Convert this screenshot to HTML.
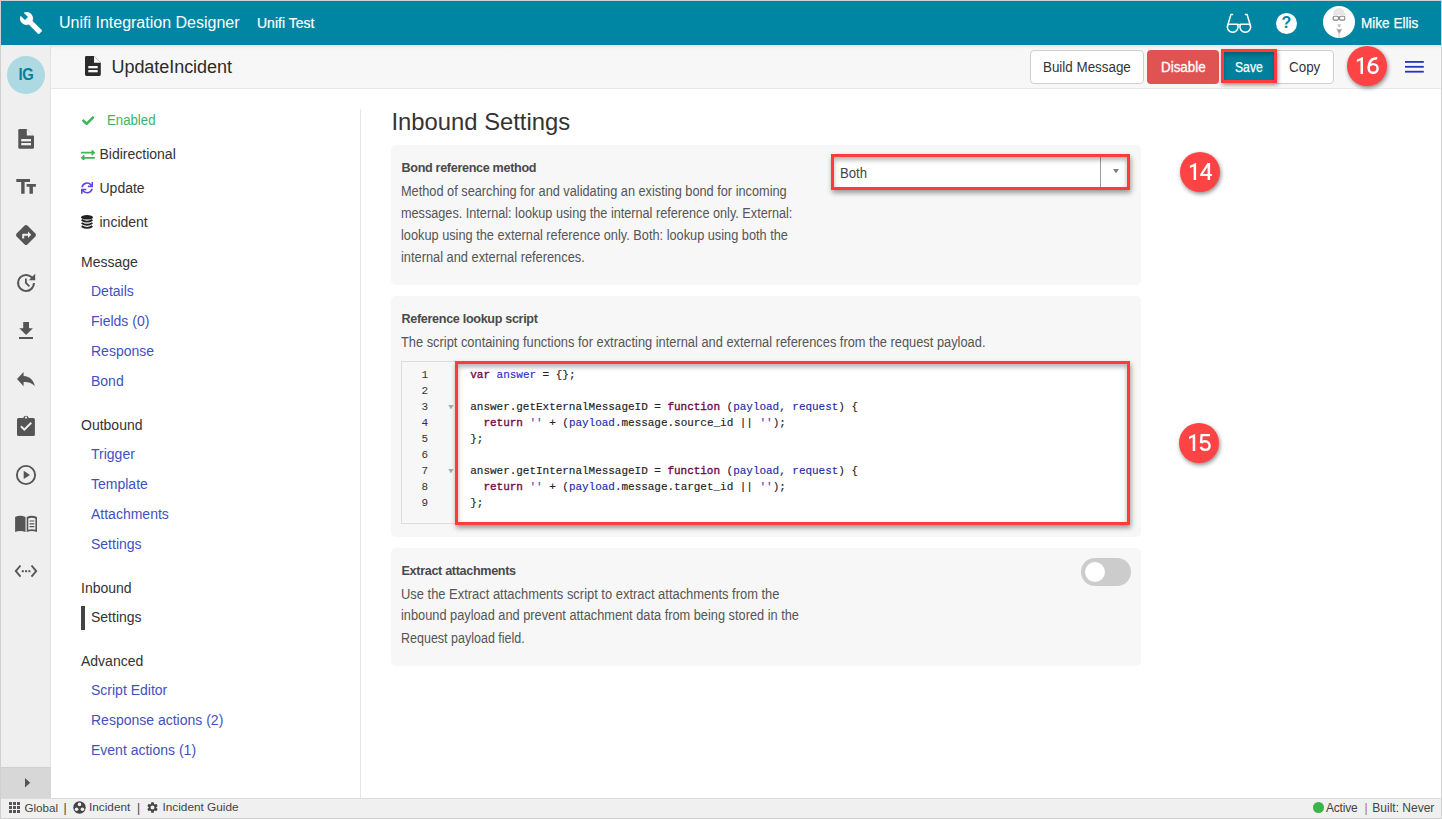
<!DOCTYPE html>
<html><head><meta charset="utf-8">
<style>
*{box-sizing:border-box;margin:0;padding:0}
html,body{width:1442px;height:819px;overflow:hidden;background:#fff;font-family:"Liberation Sans",sans-serif;color:#333}
.a{position:absolute}
.t{position:absolute;line-height:1;white-space:nowrap}
#frame{position:absolute;left:0;top:0;width:1442px;height:819px;border:1px solid #d0d0d0;z-index:50;pointer-events:none}
#hdr{left:0;top:0;width:1442px;height:45px;background:#0086a3;color:#fff}
#rail{left:0;top:45px;width:51px;height:753px;background:#efefef;border-right:1px solid #e2e2e2}
#titlebar{left:51px;top:45px;width:1391px;height:44px;background:#f7f7f7;border-bottom:1px solid #e8e8e8}
#titlebar:before{content:"";position:absolute;left:0;top:0;right:0;height:4px;background:linear-gradient(#e6e6e6,rgba(247,247,247,0))}
#nav{left:360px;top:109px;width:1px;height:689px;background:#e6e6e6}
#footer{left:0;top:798px;width:1442px;height:21px;background:#f0f0f0;border-top:1px solid #dcdcdc;color:#444}
.card{position:absolute;left:391px;width:750px;background:#f7f7f7;border-radius:5px}
.nv{font-size:14px;color:#333}
.lk{font-size:14px;color:#3f51c0}
.ct{font-size:14px;color:#555;transform-origin:0 0}
.ch{font-size:12.6px;font-weight:bold;color:#4a4a4a;letter-spacing:-0.32px}
.btn{position:absolute;top:50px;height:34px;border-radius:4px}
.badge{position:absolute;width:40px;height:40px;border-radius:50%;background:#fd4343;box-shadow:1px 2px 4px rgba(0,0,0,0.45);color:#fff;font-size:23px;text-align:center;line-height:40px}
.redbox{position:absolute;border:3px solid #ff3b3b;box-shadow:1px 3px 5px rgba(0,0,0,0.38), inset 0 3px 5px rgba(0,0,0,0.3)}
.code{position:absolute;font-family:"Liberation Mono",monospace;font-size:11px;line-height:16px;white-space:pre;color:#222;letter-spacing:-0.03px;-webkit-text-stroke:0.15px currentColor}
.kw{color:#6e0a46;-webkit-text-stroke:0.35px #6e0a46}
.vr{color:#2d2dd0}
.pm{color:#1f2aa8}
.st{color:#3d3dd0}
</style></head><body>

<!-- HEADER -->
<div id="hdr" class="a">
  <svg class="a" style="left:19px;top:11px" width="24" height="24" viewBox="0 0 24 24"><path fill="#fff" d="M22.7 19l-9.1-9.1c.9-2.3.4-5-1.5-6.9-2-2-5-2.4-7.4-1.3L9 6 6 9 1.6 4.7C.4 7.1.9 10.1 2.9 12.1c1.9 1.9 4.6 2.4 6.9 1.5l9.1 9.1c.4.4 1 .4 1.4 0l2.3-2.3c.5-.4.5-1.1.1-1.4z"/></svg>
  <div class="t" style="left:59px;top:14.5px;font-size:16px">Unifi Integration Designer</div>
  <div class="t" style="left:257px;top:16.2px;font-size:14px;-webkit-text-stroke:0.2px #fff">Unifi Test</div>
  <!-- glasses -->
  <svg class="a" style="left:1225px;top:13px" width="28" height="21" viewBox="0 0 28 21">
    <g fill="none" stroke="#fff" stroke-width="1.5" stroke-linejoin="round">
      <path d="M2.9 11.3 A5.4 5.4 0 1 0 12.5 11.3Z"/>
      <path d="M15.5 11.3 A5.4 5.4 0 1 0 25.1 11.3Z"/>
      <path d="M12.5 11.6 H15.5"/>
      <path d="M2.5 13.2 L5.9 1.4 H8.2"/><path d="M25.5 13.2 L22.1 1.4 H19.8"/>
    </g>
  </svg>
  <!-- help -->
  <div class="a" style="left:1276px;top:12.5px;width:21px;height:21px;border-radius:50%;background:#fff"></div>
  <div class="t" style="left:1276px;top:15px;width:21px;text-align:center;font-size:16px;font-weight:bold;color:#0086a3">?</div>
  <!-- avatar -->
  <div class="a" style="left:1323px;top:6px;width:32px;height:32px;border-radius:50%;background:#fff;overflow:hidden">
    <svg width="32" height="32" viewBox="0 0 32 32">
      <path d="M10 9 Q10.5 2 16 2 Q21.5 2 22 9Z" fill="#e6e6e6"/>
      <rect x="10.2" y="10.3" width="5.2" height="3.8" rx="1" fill="none" stroke="#858585" stroke-width="1.1"/>
      <rect x="16.6" y="10.3" width="5.2" height="3.8" rx="1" fill="none" stroke="#858585" stroke-width="1.1"/>
      <path d="M15.4 11 H16.6" stroke="#858585" stroke-width="1"/>
      <path d="M14.3 18.2 H18 L17 21 H15.3Z" fill="#c4c4c4"/>
      <path d="M13.2 22.6 Q16 24.5 19.2 22.6 L16.6 27.2 H15.8Z" fill="#9a9a9a"/>
      <rect x="15.2" y="27" width="2.2" height="5" fill="#e0e0e0"/>
    </svg>
  </div>
  <div class="t" style="left:1361px;top:15.4px;font-size:15px;-webkit-text-stroke:0.25px #fff;transform-origin:0 0;transform:scaleX(0.905)">Mike Ellis</div>
</div>

<!-- LEFT RAIL -->
<div id="rail" class="a"></div>
<div class="a" style="left:7px;top:56px;width:38px;height:38px;border-radius:50%;background:#acd9e2"></div>
<div class="t" style="left:7px;top:65.6px;width:38px;text-align:center;font-size:17px;font-weight:bold;color:#0a7d98;transform:scaleX(0.87);letter-spacing:-0.3px">IG</div>
<div class="a" style="left:0;top:767px;width:51px;height:31px;background:#d7d7d7;border-top:1px solid #d0d0d0;border-right:1px solid #d4d4d4"></div>
<svg class="a" style="left:25px;top:777.6px" width="6" height="10" viewBox="0 0 6 10"><path d="M0 0 L5.2 4.7 L0 9.4Z" fill="#555"/></svg>

<svg class="a" style="left:0;top:120px" width="51" height="470" viewBox="0 120 51 470">
  <g fill="#555">
  <!-- file -->
  <path d="M19.5 129 H26.8 L34 136 V147.2 A1.6 1.6 0 0 1 32.4 148.8 H19.9 A1.6 1.6 0 0 1 18.3 147.2 V130.2 A1.2 1.2 0 0 1 19.5 129Z"/>
  <!-- Tt -->
  <path d="M16.3 179 H30 V182 H24.6 V193.7 H21.2 V182 H16.3Z M26.6 184 H35.9 V186.8 H32.9 V193.7 H29.5 V186.8 H26.6Z"/>
  <!-- diamond -->
  <path d="M24.6 225.6 Q26 224.4 27.4 225.6 L35.4 233.6 Q36.6 235 35.4 236.4 L27.4 244.4 Q26 245.6 24.6 244.4 L16.6 236.4 Q15.4 235 16.6 233.6Z"/>
  <!-- history -->
  <path d="M26.1 274 A9 9 0 1 0 35 283 H33 A7 7 0 1 1 31 278 L28.8 280.2 H35.2 V273.8 L32.4 276.6 A8.8 8.8 0 0 0 26.1 274Z"/>
  <path d="M25 278.5 H26.8 V282.6 L30 285.8 L28.8 287 L25 283.3Z"/>
  <!-- download -->
  <path d="M23.2 322 H29 V328.2 H32.9 L26.1 335 L19.3 328.2 H23.2Z M19 337 H33 V339 H19Z"/>
  <!-- reply -->
  <path d="M17 379 L23.6 372 V376 C30 376.5 33.5 380 35 386.5 C32.5 383.2 29 382 23.6 382 V386.2Z"/>
  <!-- clipboard -->
  <path d="M18.6 418 H23.2 A2.9 2.9 0 0 1 28.8 418 H33.4 A1.5 1.5 0 0 1 34.9 419.5 V434.4 A1.5 1.5 0 0 1 33.4 435.9 H18.5 A1.5 1.5 0 0 1 17 434.4 V419.5 A1.5 1.5 0 0 1 18.6 418Z"/>
  <!-- play circle -->
  <path d="M23.7 470.7 L30 474.9 L23.7 479Z"/>
  <!-- book -->
  <path d="M15.1 517 Q20 514.5 25.5 517 V532 Q20 530 15.1 532Z"/>
  <path d="M26.7 517 Q31.5 514.5 37 517 V532 Q31.5 530 26.7 532Z M28.3 518.5 V529.8 Q31.8 528.6 35.4 529.8 V518.5 Q31.8 517.2 28.3 518.5Z"/>
  <path d="M29.5 520.4 H34.3 V521.6 H29.5Z M29.5 523.2 H34.3 V524.4 H29.5Z M29.5 526 H34.3 V527.2 H29.5Z"/>
  <!-- code dots -->
  <rect x="21.8" y="570.2" width="2" height="2"/><rect x="25.1" y="570.2" width="2" height="2"/><rect x="28.4" y="570.2" width="2" height="2"/>
  </g>
  <g fill="#efefef">
    <path d="M26.8 129 V135.6 H34Z"/>
    <rect x="21.2" y="139" width="9.8" height="2.4"/><rect x="21.2" y="143" width="9.8" height="2.3"/>
    <path d="M22.2 238.5 V234.6 Q22.2 233.7 23.1 233.7 H28 V231.5 L31.2 234.7 L28 237.9 V235.7 H24.2 V238.5Z"/>
    <circle cx="26" cy="417.6" r="1.1"/>
    <path d="M20.2 427 L21.6 425.6 L24.3 428.3 L30.6 422 L32 423.4 L24.3 431.1Z"/>
  </g>
  <g fill="none" stroke="#555">
    <circle cx="26" cy="475" r="9.1" stroke-width="1.9"/>
    <path d="M20.5 565.5 L15.8 571.1 L20.5 576.7 M31.5 565.5 L36.2 571.1 L31.5 576.7" stroke-width="1.9"/>
  </g>
</svg>

<!-- TITLE BAR -->
<div id="titlebar" class="a"></div>
<svg class="a" style="left:85px;top:56px" width="16" height="20" viewBox="0 0 16 20"><path fill="#2b2b2b" d="M1.3 0 H9 L15.8 6.8 V18.6 A1.4 1.4 0 0 1 14.4 20 H1.4 A1.4 1.4 0 0 1 0 18.6 V1.3 A1.3 1.3 0 0 1 1.3 0Z"/><path fill="#f7f7f7" d="M9 0 V6.8 H15.8Z"/><rect x="3.3" y="10" width="9.4" height="2.3" fill="#f7f7f7"/><rect x="3.3" y="14" width="9.4" height="2.3" fill="#f7f7f7"/></svg>
<div class="t" style="left:111.5px;top:58.2px;font-size:18px;color:#2b2b2b;letter-spacing:-0.05px">UpdateIncident</div>

<div class="btn" style="left:1030px;width:114px;background:#fff;border:1px solid #cfcfcf"></div>
<div class="t" style="left:1043px;top:60px;font-size:14px;color:#333;transform-origin:0 0;transform:scaleX(0.956)">Build Message</div>
<div class="btn" style="left:1147px;width:72px;background:#e05353"></div>
<div class="t" style="left:1160.5px;top:60px;font-size:14px;color:#fff;-webkit-text-stroke:0.3px #fff;transform-origin:0 0;transform:scaleX(0.955)">Disable</div>
<div class="btn" style="left:1276px;width:58px;background:#fff;border:1px solid #cfcfcf;border-radius:0 4px 4px 0"></div>
<div class="t" style="left:1289px;top:60px;font-size:14px;color:#333;transform-origin:0 0;transform:scaleX(0.957)">Copy</div>
<div class="a" style="left:1221px;top:49px;width:56px;height:34px;background:#00809c;border:3px solid #ff3b3b;box-shadow:1px 2px 4px rgba(0,0,0,0.4), inset 0 3px 4px rgba(0,0,0,0.25)"></div>
<div class="t" style="left:1235px;top:60px;font-size:14px;color:#fff;-webkit-text-stroke:0.25px #fff;transform-origin:0 0;transform:scaleX(0.87)">Save</div>
<div class="badge" style="left:1347px;top:46px"><svg width="40" height="40" viewBox="0 0 40 40" style="display:block"><path d="M16.0 11.1 V28 H13.5 V14.6 L9.8 15.9 V13.7 L15.6 11.1Z" fill="#fff"/><g fill="none" stroke="#fff" stroke-width="2.4"><ellipse cx="26.15" cy="22.45" rx="4.45" ry="4.35"/><path d="M30.2 12.3 C25 12.3 21.7 15.6 21.7 22.5"/></g></svg></div>
<svg class="a" style="left:1404.6px;top:61.2px" width="19" height="12" viewBox="0 0 19 12"><g fill="#2236c0"><rect y="0" width="18.8" height="1.8"/><rect y="4.9" width="18.8" height="1.8"/><rect y="9.8" width="18.8" height="1.8"/></g></svg>

<!-- NAV -->
<div id="nav" class="a"></div>
<svg class="a" style="left:81.8px;top:115.5px" width="12.4" height="9.5" viewBox="0 60 512 392" preserveAspectRatio="none"><path fill="#3db65a" d="M173.898 439.404l-166.4-166.4c-9.997-9.997-9.997-26.206 0-36.204l36.203-36.204c9.997-9.998 26.207-9.998 36.204 0L192 312.69 432.095 72.596c9.997-9.997 26.207-9.997 36.204 0l36.203 36.204c9.997 9.997 9.997 26.206 0 36.204l-294.4 294.401c-9.998 9.997-26.207 9.997-36.204-.001z"/></svg>
<div class="t" style="left:106.6px;top:113.3px;font-size:14px;color:#47b060;transform-origin:0 0;transform:scaleX(0.944)">Enabled</div>
<svg class="a" style="left:81px;top:149.5px" width="14" height="10.5" viewBox="0 58 512 396" preserveAspectRatio="none"><path fill="#3db65a" d="M0 168v-16c0-13.255 10.745-24 24-24h360V80c0-21.367 25.899-32.042 40.971-16.971l80 80c9.372 9.373 9.372 24.569 0 33.941l-80 80C409.956 271.982 384 261.456 384 240v-48H24c-13.255 0-24-10.745-24-24zm488 152H128v-48c0-21.314-25.862-32.08-40.971-16.971l-80 80c-9.372 9.373-9.372 24.569 0 33.941l80 80C102.057 463.997 128 453.437 128 432v-48h360c13.255 0 24-10.745 24-24v-16c0-13.255-10.745-24-24-24z"/></svg>
<div class="t" style="left:99.5px;top:147.2px;font-size:14px">Bidirectional</div>
<svg class="a" style="left:81px;top:182px" width="12.2" height="11.8" viewBox="0 0 512 512" preserveAspectRatio="none"><path fill="#6544f0" d="M440.65 12.57l4 82.77A247.16 247.16 0 0 0 255.83 8C134.730 8 33.91 94.92 12.29 209.82A12 12 0 0 0 24.09 224h49.05a12 12 0 0 0 11.67-9.26 175.91 175.910 0 0 1 317-56.94l-101.46-4.86a12 12 0 0 0-12.57 12v47.41a12 12 0 0 0 12 12H500a12 12 0 0 0 12-12V12a12 12 0 0 0-12-12h-47.37a12 12 0 0 0-11.98 12.57zM255.83 432a175.61 175.61 0 0 1-146-77.8l101.8 4.87a12 12 0 0 0 12.57-12v-47.4a12 12 0 0 0-12-12H12a12 12 0 0 0-12 12V500a12 12 0 0 0 12 12h47.35a12 12 0 0 0 12-12.6l-4.15-82.57A247.17 247.17 0 0 0 255.83 504c121.11 0 221.93-86.92 243.55-201.82a12 12 0 0 0-11.8-14.18h-49.05a12 12 0 0 0-11.67 9.26A175.86 175.86 0 0 1 255.83 432z"/></svg>
<div class="t" style="left:99.5px;top:181px;font-size:14px">Update</div>
<svg class="a" style="left:81px;top:215px" width="12" height="14" viewBox="0 0 12 14"><g fill="#222"><ellipse cx="6" cy="2.3" rx="6" ry="2.3"/></g><g fill="none" stroke="#222" stroke-width="1.9"><path d="M0.6 4.9 Q6 8.4 11.4 4.9"/><path d="M0.6 8.0 Q6 11.5 11.4 8.0"/><path d="M0.6 11.1 Q6 14.6 11.4 11.1"/></g></svg>
<div class="t" style="left:99.5px;top:215px;font-size:14px">incident</div>

<div class="t nv" style="left:81px;top:255.2px">Message</div>
<div class="t lk" style="left:91px;top:284.2px">Details</div>
<div class="t lk" style="left:91px;top:314.2px">Fields (0)</div>
<div class="t lk" style="left:91px;top:343.9px">Response</div>
<div class="t lk" style="left:91px;top:373.8px">Bond</div>

<div class="t nv" style="left:81px;top:418.1px">Outbound</div>
<div class="t lk" style="left:91px;top:446.8px">Trigger</div>
<div class="t lk" style="left:91px;top:477.1px">Template</div>
<div class="t lk" style="left:91px;top:506.8px">Attachments</div>
<div class="t lk" style="left:91px;top:536.7px">Settings</div>

<div class="t nv" style="left:81px;top:581.4px">Inbound</div>
<div class="a" style="left:81px;top:606px;width:4px;height:24px;background:#444"></div>
<div class="t nv" style="left:91px;top:610.2px">Settings</div>

<div class="t nv" style="left:81px;top:653.9px">Advanced</div>
<div class="t lk" style="left:91px;top:683.2px">Script Editor</div>
<div class="t lk" style="left:91px;top:713.2px">Response actions (2)</div>
<div class="t lk" style="left:91px;top:743.1px">Event actions (1)</div>

<!-- CONTENT -->
<div class="t" style="left:391.5px;top:109.5px;font-size:23.8px;color:#333">Inbound Settings</div>

<div class="card" style="top:145px;height:140px"></div>
<div class="t ch" style="left:401.5px;top:162.3px">Bond reference method</div>
<div class="t ct" style="left:401px;top:183.65px;transform:scaleX(0.911)">Method of searching for and validating an existing bond for incoming</div>
<div class="t ct" style="left:401px;top:205.65px;transform:scaleX(0.905)">messages. Internal: lookup using the internal reference only. External:</div>
<div class="t ct" style="left:401px;top:227.65px;transform:scaleX(0.911)">lookup using the external reference only. Both: lookup using both the</div>
<div class="t ct" style="left:401px;top:249.65px;transform:scaleX(0.915)">internal and external references.</div>

<div class="a" style="left:834px;top:157px;width:293px;height:30px;background:#fff"></div>
<div class="a" style="left:1100px;top:157px;width:1px;height:30px;background:#9a9a9a"></div>
<svg class="a" style="left:1112.6px;top:169.4px" width="6" height="5" viewBox="0 0 6 5"><path d="M0 0 H6 L3 4.5Z" fill="#808080"/></svg>
<div class="t" style="left:840px;top:165.6px;font-size:14px;color:#444;transform-origin:0 0;transform:scaleX(0.94)">Both</div>
<div class="redbox" style="left:831px;top:154px;width:299px;height:36px"></div>
<div class="badge" style="left:1180px;top:152px"><svg width="40" height="40" viewBox="0 0 40 40" style="display:block"><path d="M16.1 11.1 V28 H13.6 V14.6 L9.9 15.9 V13.7 L15.7 11.1Z" fill="#fff"/><path fill="#fff" fill-rule="evenodd" d="M27.5 11.1 H30.1 V21.9 H31.9 V24.1 H30.1 V28 H27.6 V24.1 H20.2 V22.2 Z M27.6 15.0 L22.9 21.9 H27.6Z"/></svg></div>

<div class="card" style="top:296px;height:241px"></div>
<div class="t ch" style="left:401.5px;top:312.5px">Reference lookup script</div>
<div class="t ct" style="left:401px;top:334.65px;transform:scaleX(0.917)">The script containing functions for extracting internal and external references from the request payload.</div>

<div class="a" style="left:401px;top:361px;width:729px;height:163px;background:#fff;border:1px solid #ddd"></div>
<div class="a" style="left:402px;top:362px;width:53px;height:161px;background:#f7f7f7"></div>
<div class="code" style="left:402px;top:367px;width:26px;text-align:right;color:#333;-webkit-text-stroke:0">1
2
3
4
5
6
7
8
9</div>
<svg class="a" style="left:447.5px;top:404.6px" width="6" height="70" viewBox="0 0 6 70"><path d="M0.3 0 H5.5 L2.9 4.4Z M0.3 64 H5.5 L2.9 68.4Z" fill="#aaa"/></svg>
<div class="redbox" style="left:455px;top:361px;width:675px;height:164px"></div>
<div class="code" style="left:470.3px;top:367px"><span class="kw">var</span> <span class="vr">answer</span> = {};

answer.getExternalMessageID = <span class="kw">function</span> (<span class="pm">payload</span>, <span class="pm">request</span>) {
  <span class="kw">return</span> <span class="st">''</span> + (<span class="pm">payload</span>.message.source_id || <span class="st">''</span>);
};

answer.getInternalMessageID = <span class="kw">function</span> (<span class="pm">payload</span>, <span class="pm">request</span>) {
  <span class="kw">return</span> <span class="st">''</span> + (<span class="pm">payload</span>.message.target_id || <span class="st">''</span>);
};</div>
<div class="badge" style="left:1179px;top:423px"><svg width="40" height="40" viewBox="0 0 40 40" style="display:block"><path d="M16.2 11.1 V28 H13.7 V14.6 L10.0 15.9 V13.7 L15.8 11.1Z" fill="#fff"/><g fill="none" stroke="#fff"><path d="M31.0 12.2 H22.6 L22.0 20.2" stroke-width="2.3"/><path d="M22.2 19.9 C23.2 18.8 24.5 18.3 26 18.3 C29 18.3 30.6 20.5 30.6 23 C30.6 25.8 28.8 26.9 26.1 26.9 C23.8 26.9 22.2 25.7 21.9 23.8" stroke-width="2.4"/></g></svg></div>

<div class="card" style="top:548px;height:118px"></div>
<div class="t ch" style="left:401.5px;top:565px">Extract attachments</div>
<div class="t ct" style="left:401px;top:586.65px;transform:scaleX(0.923)">Use the Extract attachments script to extract attachments from the</div>
<div class="t ct" style="left:401px;top:608.4px;transform:scaleX(0.913)">inbound payload and prevent attachment data from being stored in the</div>
<div class="t ct" style="left:401px;top:630.65px;transform:scaleX(0.893)">Request payload field.</div>
<div class="a" style="left:1081px;top:558px;width:50px;height:28px;border-radius:14px;background:#ccc"></div>
<div class="a" style="left:1085px;top:562px;width:20px;height:20px;border-radius:50%;background:#fff"></div>

<!-- FOOTER -->
<div id="footer" class="a"></div>
<svg class="a" style="left:9px;top:802px" width="11" height="11" viewBox="0 0 11 11"><g fill="#555"><rect x="0" y="0" width="3" height="3"/><rect x="4" y="0" width="3" height="3"/><rect x="8" y="0" width="3" height="3"/><rect x="0" y="4" width="3" height="3"/><rect x="4" y="4" width="3" height="3"/><rect x="8" y="4" width="3" height="3"/><rect x="0" y="8" width="3" height="3"/><rect x="4" y="8" width="3" height="3"/><rect x="8" y="8" width="3" height="3"/></g></svg>
<div class="t" style="left:24.5px;top:802px;font-size:11.6px;color:#444">Global</div>
<div class="t" style="left:63.5px;top:802px;font-size:12px;color:#444">|</div>
<svg class="a" style="left:73px;top:801px" width="13" height="13" viewBox="0 0 13 13"><circle cx="6.5" cy="6.5" r="6.2" fill="#444"/><g fill="#f0f0f0"><circle cx="6.5" cy="3.4" r="1.8"/><circle cx="3.6" cy="8.2" r="1.8"/><circle cx="9.4" cy="8.2" r="1.8"/></g></svg>
<div class="t" style="left:89px;top:802px;font-size:11.8px;color:#444">Incident</div>
<div class="t" style="left:137px;top:802px;font-size:12px;color:#444">|</div>
<svg class="a" style="left:145.5px;top:801px" width="13" height="13" viewBox="0 0 24 24"><path fill="#444" d="M19.14 12.94c.04-.3.06-.61.06-.94 0-.32-.02-.64-.07-.94l2.03-1.58a.49.49 0 0 0 .12-.61l-1.92-3.32a.488.488 0 0 0-.59-.22l-2.39.96c-.5-.38-1.03-.7-1.62-.94l-.36-2.54a.484.484 0 0 0-.48-.41h-3.84c-.24 0-.43.17-.47.41l-.36 2.54c-.59.24-1.13.57-1.62.94l-2.39-.96c-.22-.08-.47 0-.59.22L2.74 8.87c-.12.21-.08.47.12.61l2.03 1.58c-.05.3-.09.63-.09.94s.02.64.07.94l-2.03 1.58a.49.49 0 0 0-.12.61l1.92 3.32c.12.22.37.29.59.22l2.39-.96c.5.38 1.03.7 1.62.94l.36 2.54c.05.24.24.41.48.41h3.84c.24 0 .44-.17.47-.41l.36-2.54c.59-.24 1.13-.56 1.62-.94l2.39.96c.22.08.47 0 .59-.22l1.92-3.32c.12-.22.07-.47-.12-.61l-2.01-1.58zM12 15.6c-1.98 0-3.6-1.62-3.6-3.6s1.62-3.6 3.6-3.6 3.6 1.62 3.6 3.6-1.62 3.6-3.6 3.6z"/></svg>
<div class="t" style="left:162.5px;top:802px;font-size:11.8px;color:#444">Incident Guide</div>

<div class="a" style="left:1313px;top:802px;width:10.5px;height:10.5px;border-radius:50%;background:#3bb54a"></div>
<div class="t" style="left:1326px;top:802px;font-size:12px;color:#444;letter-spacing:-0.2px">Active</div>
<div class="t" style="left:1364.5px;top:802px;font-size:12px;color:#b0704a">|</div>
<div class="t" style="left:1372.3px;top:802px;font-size:12px;color:#444">Built: Never</div>

<div id="frame"></div>
</body></html>
